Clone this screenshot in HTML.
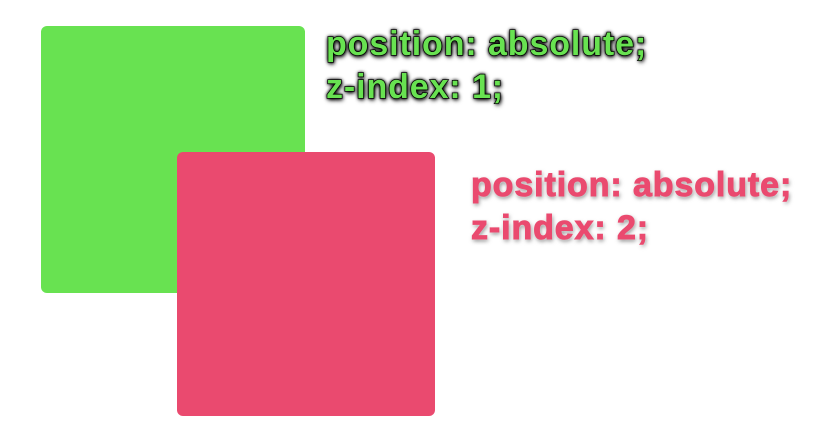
<!DOCTYPE html>
<html><head><style>
html,body{margin:0;padding:0;background:#fff;width:834px;height:438px;overflow:hidden;position:relative}
.b{position:absolute;border-radius:6px}
.t{position:absolute;font-family:"Liberation Sans",Arial,sans-serif;font-weight:bold;font-size:34px;line-height:43px;letter-spacing:0.9px;white-space:nowrap}
</style></head><body>
<div class="b" style="left:41px;top:26px;width:264px;height:267px;background:#68e251"></div>
<div class="b" style="left:177px;top:152px;width:258px;height:264px;background:#ea4a6f"></div>
<div class="t" style="left:326px;top:23px;color:#68e251;-webkit-text-stroke:1.5px #111;paint-order:stroke fill;text-shadow:0 0 3px #000,0 0 4px #000,1px 2px 5px #000">position: absolute;<br>z-index: 1;</div>
<div class="t" style="left:471px;top:164px;color:#ea4a6f;-webkit-text-stroke:1px #ea4a6f;text-shadow:0 0 2px #fff,1px 2px 4px rgba(0,0,0,.5)">position: absolute;<br>z-index: 2;</div>
</body></html>
